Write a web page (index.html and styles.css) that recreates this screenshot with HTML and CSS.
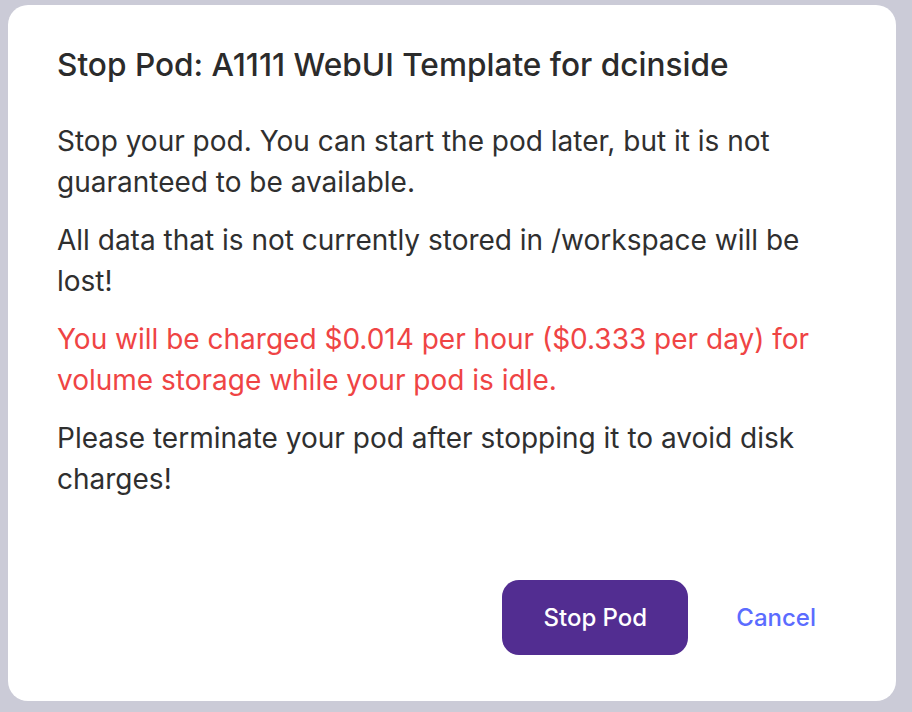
FILE: index.html
```html
<!DOCTYPE html>
<html lang="en">

<head>
    <meta charset="UTF-8">
    <meta name="viewport" content="width=device-width, initial-scale=1.0">
    <title>Stop Pod</title>
    <link rel="stylesheet" href="styles.css">
</head>

<body>
    <div class="overlay">
        <div class="dialog">
            <h2 class="dialog-title">Stop Pod: A1111 WebUI Template for dcinside</h2>
            <div class="dialog-body">
                <p>Stop your pod. You can start the pod later, but it is not guaranteed to be available.</p>
                <p>All data that is not currently stored in /workspace will be lost!</p>
                <p class="warn">You will be charged $0.014 per hour ($0.333 per day) for volume storage while your pod is idle.</p>
                <p>Please terminate your pod after stopping it to avoid disk charges!</p>
            </div>
            <div class="dialog-actions">
                <button class="btn-stop">Stop Pod</button>
                <button class="btn-cancel">Cancel</button>
            </div>
        </div>
    </div>
</body>

</html>
```

FILE: styles.css
```css
* {
    margin: 0;
    padding: 0;
    box-sizing: border-box;
}

body {
    background-color: #cbcbd7;
    font-family: Inter, "Noto Sans", sans-serif;
    color: #2f2f2f;
}

.overlay {
    padding: 5px 16px 11px 8px;
}

.dialog {
    background: #fff;
    border-radius: 20px;
    height: 696px;
    padding: 42px 49px 46px 49px;
    display: flex;
    flex-direction: column;
}

.dialog-title {
    font-size: 31.6px;
    font-weight: 500;
    line-height: 36px;
    color: #2b2b2b;
}

.dialog-body {
    margin-top: 38px;
    font-size: 28px;
    line-height: 41px;
}

.dialog-body p {
    margin-bottom: 17px;
}

.dialog-body .warn {
    color: #ef4444;
}

.dialog-actions {
    margin-top: auto;
    display: flex;
    justify-content: flex-end;
    align-items: center;
    gap: 16px;
}

.btn-stop {
    font-family: inherit;
    width: 186px;
    height: 75px;
    border: none;
    border-radius: 17px;
    background: #522d91;
    color: #fff;
    font-size: 24px;
    font-weight: 500;
}

.btn-cancel {
    font-family: inherit;
    border: none;
    background: none;
    color: #5b6cff;
    font-size: 24px;
    font-weight: 500;
    padding: 0 31px 0 32px;
    height: 75px;
}
```
